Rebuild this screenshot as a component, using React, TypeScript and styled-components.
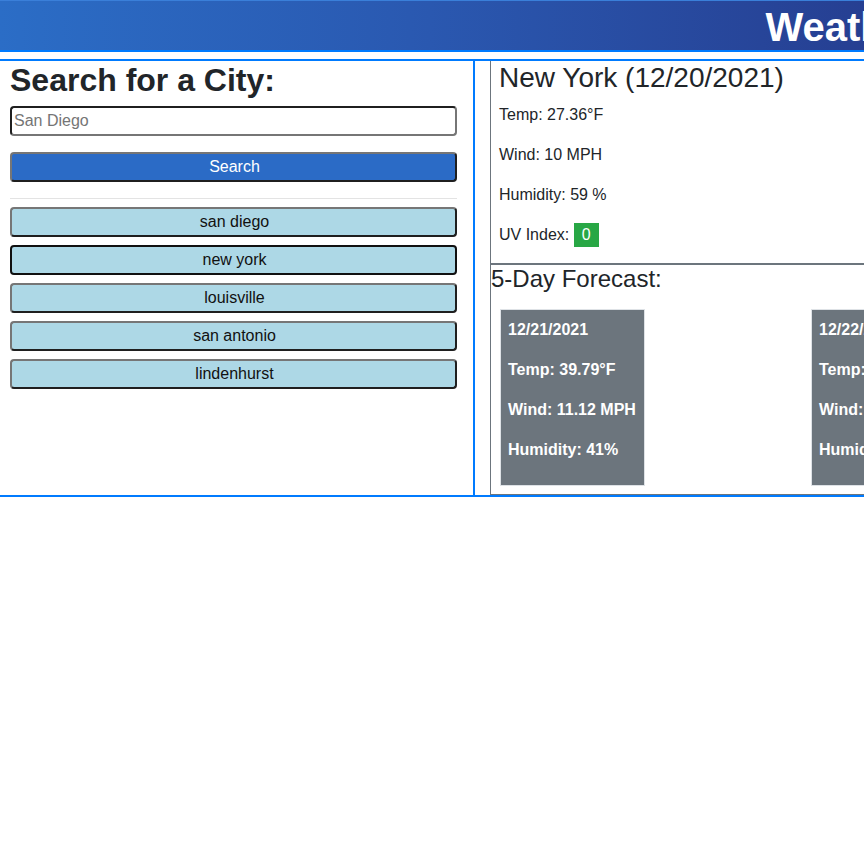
import { memo } from "react"
import styled, { createGlobalStyle } from "styled-components"

const GlobalStyle = createGlobalStyle`
  body {
    margin: 0;
    overflow: hidden;
    font-family: "Liberation Sans", Arial, sans-serif;
    color: #212529;
    background: #fff;
  }
`;

const Page = styled.div`
  width: 1910px;
`;

const Header = styled.header`
  box-sizing: border-box;
  height: 52px;
  padding-top: 3px;
  margin-bottom: 7px;
  border-top: 1px solid #3a7fd9;
  border-bottom: 2px solid #007bff;
  background: linear-gradient(to right, #2b6dc6 0px, #2a58b0 430px, #263f92 864px, #263f92);
  text-align: center;
`;

const Title = styled.h1`
  margin: 0;
  padding-right: 2px;
  font-size: 40px;
  line-height: 46px;
  font-weight: 700;
  color: #fff;
`;

const Row = styled.main`
  display: flex;
  align-items: stretch;
  border-top: 2px solid #007bff;
  border-bottom: 2px solid #007bff;
`;

const Sidebar = styled.aside`
  box-sizing: border-box;
  width: 475px;
  flex: none;
  padding: 0 16px 0 10px;
  border-right: 2px solid #007bff;
`;

const SideTitle = styled.h2`
  margin: 0 0 7px;
  font-size: 32px;
  line-height: 38px;
  font-weight: 700;
`;

const SearchInput = styled.input`
  display: block;
  box-sizing: border-box;
  width: 100%;
  height: 30px;
  padding: 1px 2px;
  margin: 0 0 16px;
  font-family: inherit;
  font-size: 16px;
  border: 2px solid;
  border-color: #1f1f1f #767676 #767676 #1f1f1f;
  border-radius: 4px;
  &::placeholder {
    color: #757575;
  }
`;

const Button = styled.button<{ $bg: string; $color: string; $focused?: boolean }>`
  display: block;
  box-sizing: border-box;
  width: 100%;
  height: 30px;
  padding: 0 0 0 2px;
  font-family: inherit;
  font-size: 16px;
  line-height: 26px;
  background: ${({ $bg }) => $bg};
  color: ${({ $color }) => $color};
  border: 2px solid;
  border-color: ${({ $focused }) =>
    $focused ? "#101010" : "#767676 #1f1f1f #1f1f1f #767676"};
  border-radius: 4px;
  text-align: center;
`;

const Divider = styled.hr`
  margin: 16px 0 8px;
  border: 0;
  border-top: 1px solid #e3e3e3;
`;

const CityList = styled.div`
  display: flex;
  flex-direction: column;
  gap: 8px;
`;

const Main = styled.section`
  flex: 1;
  margin-left: 15px;
  display: flex;
  flex-direction: column;
`;

const Current = styled.div`
  padding: 0 8px;
  border-left: 1px solid #6c757d;
  border-bottom: 2px solid #6c757d;
`;

const CityTitle = styled.h2`
  margin: 0 0 8px;
  font-size: 28px;
  line-height: 1.2;
  font-weight: 400;
`;

const Stat = styled.p`
  margin: 0 0 16px;
  font-size: 16px;
  line-height: 24px;
`;

const UvBadge = styled.span<{ $bg: string }>`
  display: inline-block;
  padding: 0 8px;
  background: ${({ $bg }) => $bg};
  color: #fff;
`;

const Forecast = styled.div`
  padding: 0 0 8px;
  border-left: 1px solid #6c757d;
  border-bottom: 1px solid #6c757d;
`;

const ForecastTitle = styled.h3`
  margin: 0 0 16px;
  font-size: 24px;
  line-height: 1.2;
  font-weight: 400;
`;

const Cards = styled.div`
  display: flex;
  gap: 166px;
  padding-left: 9px;
`;

const Card = styled.div`
  box-sizing: border-box;
  width: 145px;
  padding: 8px 7px 7px;
  background: #6c757d;
  border: 1px solid #dee2e6;
  color: #fff;
  font-weight: 700;
`;

const CardLine = styled.p`
  margin: 0 0 16px;
  font-size: 16px;
  line-height: 24px;
  white-space: nowrap;
`;

const cities = ["san diego", "new york", "louisville", "san antonio", "lindenhurst"];

const forecast = [
  { date: "12/21/2021", temp: "39.79", wind: "11.12", humidity: "41" },
  { date: "12/22/2021", temp: "44.1", wind: "9.8", humidity: "52" },
  { date: "12/23/2021", temp: "41.5", wind: "8.4", humidity: "60" },
  { date: "12/24/2021", temp: "47.02", wind: "12.3", humidity: "71" },
  { date: "12/25/2021", temp: "50.6", wind: "10.45", humidity: "66" },
];

function App() {
  return (
    <>
      <GlobalStyle />
      <Page>
        <Header>
          <Title>Weather Dashboard</Title>
        </Header>
        <Row>
          <Sidebar>
            <SideTitle>Search for a City:</SideTitle>
            <SearchInput placeholder="San Diego" />
            <Button $bg="#2b6bc6" $color="#fff">Search</Button>
            <Divider />
            <CityList>
              {cities.map((city) => (
                <Button key={city} $bg="#add8e6" $color="#111" $focused={city === "new york"}>
                  {city}
                </Button>
              ))}
            </CityList>
          </Sidebar>
          <Main>
            <Current>
              <CityTitle>New York (12/20/2021)</CityTitle>
              <Stat>Temp: 27.36°F</Stat>
              <Stat>Wind: 10 MPH</Stat>
              <Stat>Humidity: 59 %</Stat>
              <Stat>
                UV Index: <UvBadge $bg="#28a745">0</UvBadge>
              </Stat>
            </Current>
            <Forecast>
              <ForecastTitle>5-Day Forecast:</ForecastTitle>
              <Cards>
                {forecast.map((day) => (
                  <Card key={day.date}>
                    <CardLine>{day.date}</CardLine>
                    <CardLine>Temp: {day.temp}°F</CardLine>
                    <CardLine>Wind: {day.wind} MPH</CardLine>
                    <CardLine>Humidity: {day.humidity}%</CardLine>
                  </Card>
                ))}
              </Cards>
            </Forecast>
          </Main>
        </Row>
      </Page>
    </>
  );
}

export default memo(App);
